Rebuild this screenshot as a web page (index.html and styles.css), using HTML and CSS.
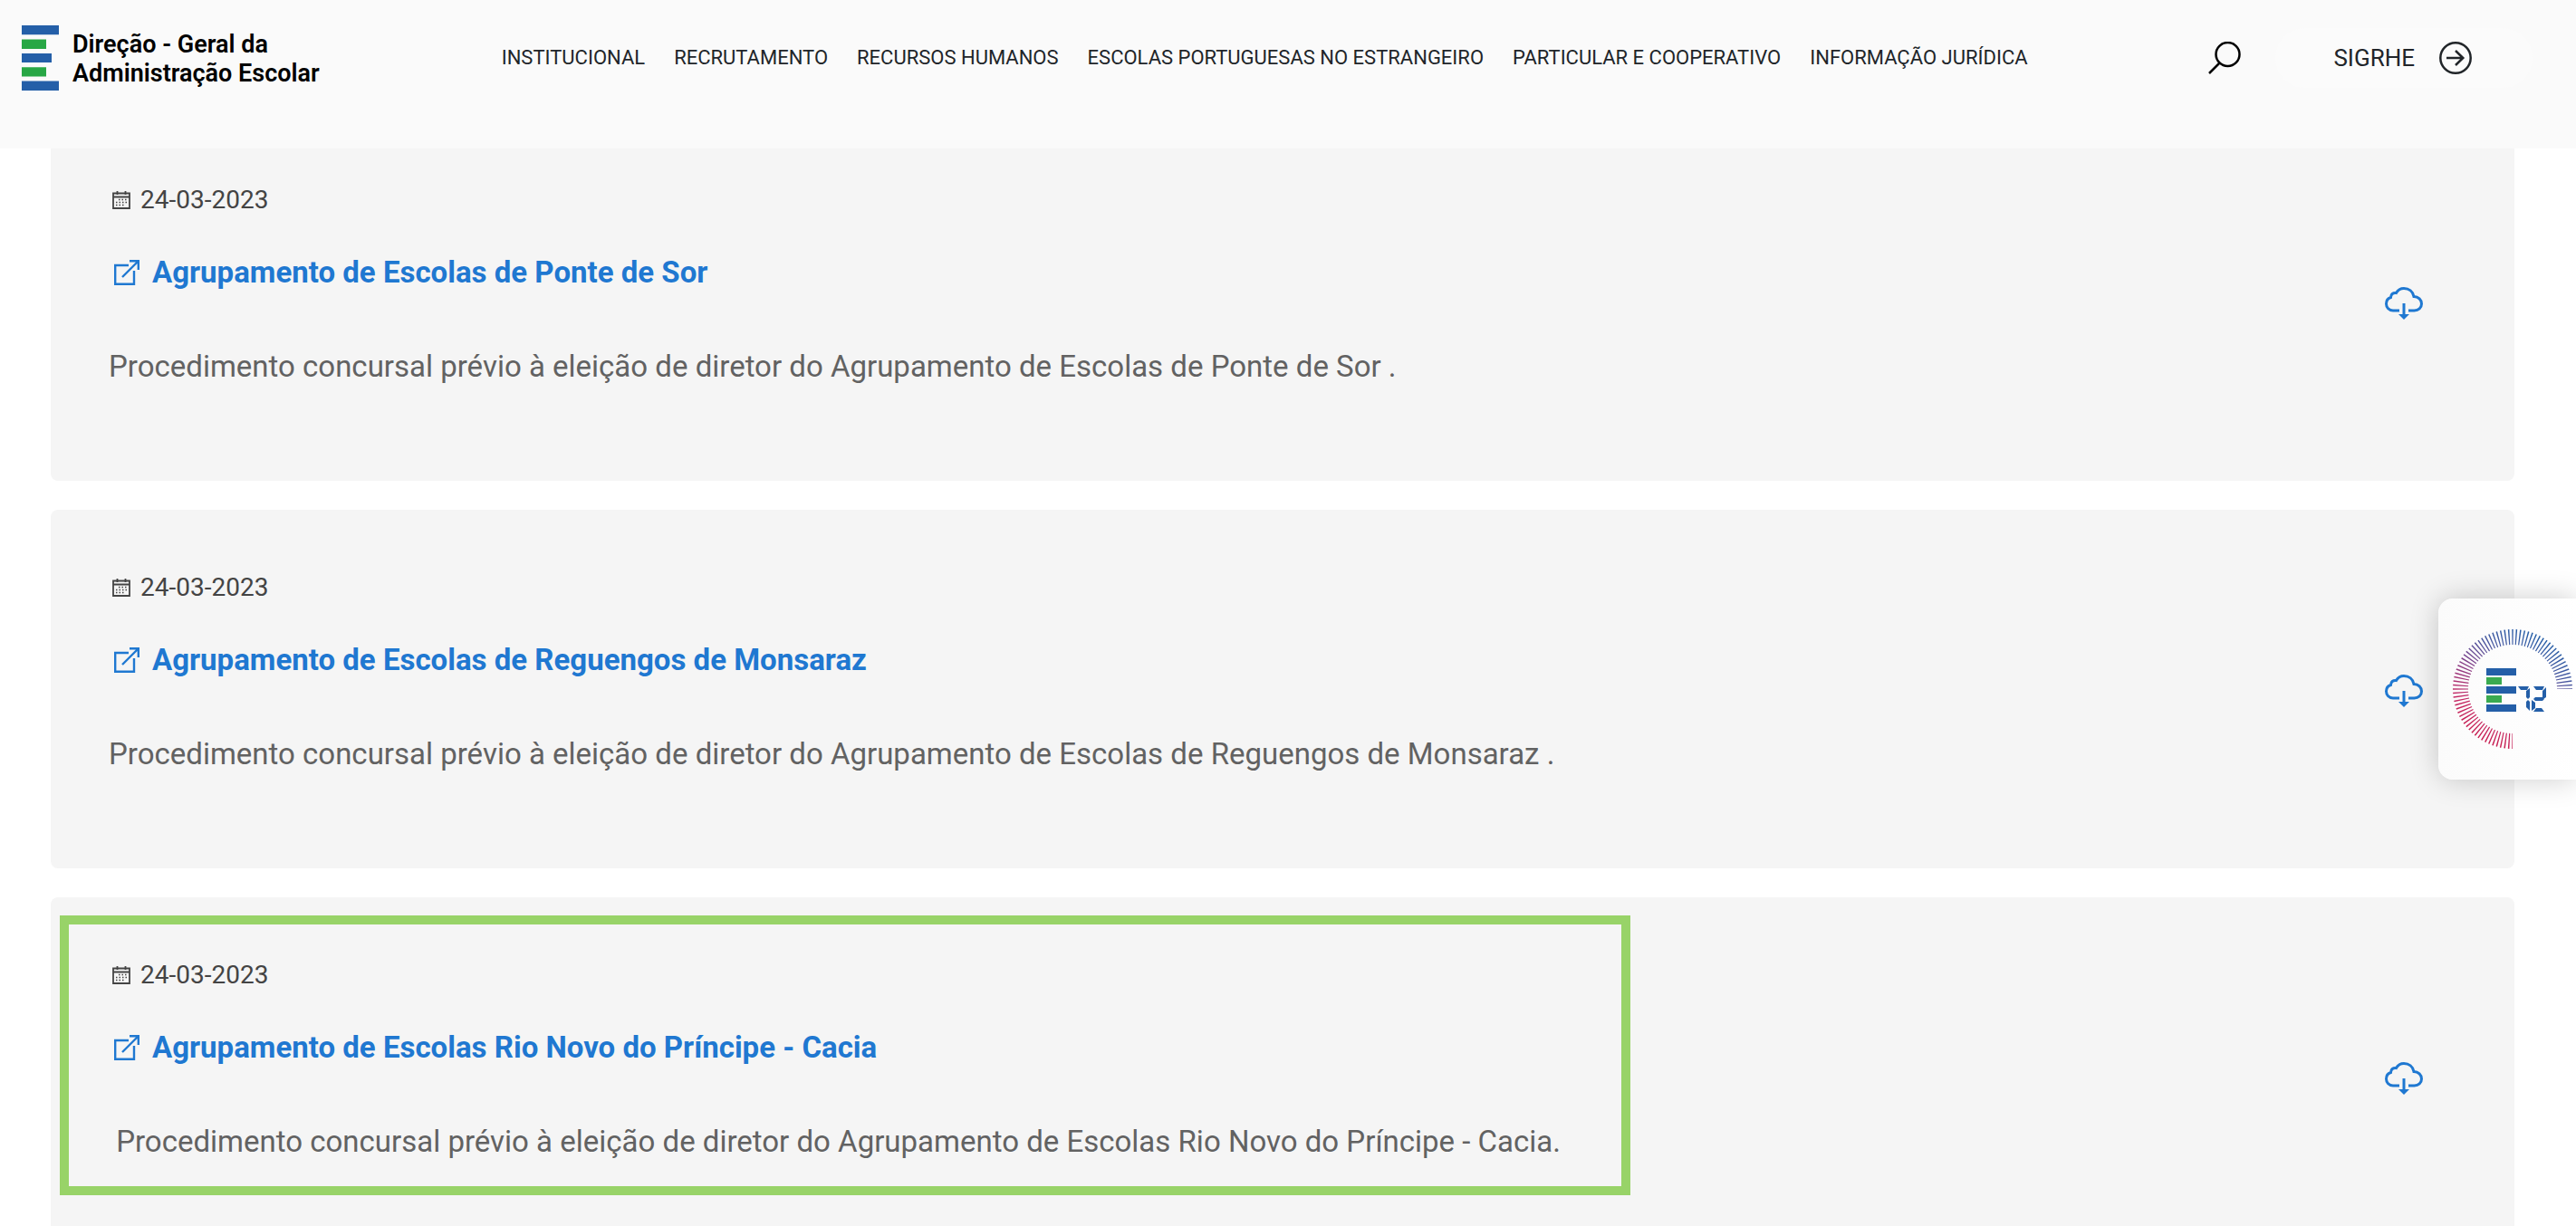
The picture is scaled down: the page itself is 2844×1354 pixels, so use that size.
FILE: index.html
```html
<!DOCTYPE html>
<html lang="pt">
<head>
<meta charset="utf-8">
<meta name="viewport" content="width=device-width, initial-scale=1">
<title>Direção-Geral da Administração Escolar</title>
<link rel="stylesheet" href="styles.css">
</head>
<body>
<svg class="sprite" aria-hidden="true">
  <symbol id="icon-calendar" viewBox="0 0 20 20">
    <path d="M1 2.500H19V19H1ZM1 6.500H19M5.500 0V4M14.500 0V4" fill="none" stroke="currentColor" stroke-width="1.800"/>
    <path d="M7 9.500H17M4 12.500H17M4 15.500H13" fill="none" stroke="currentColor" stroke-width="1.500" stroke-dasharray="1.500 2"/>
  </symbol>
  <symbol id="icon-external" viewBox="0 0 28 28">
    <path d="M16 6H1.200V26.800H22V12M17 1.200H26.800V11M26.500 1.500L9 19" fill="none" stroke="currentColor" stroke-width="2.400"/>
  </symbol>
  <symbol id="icon-cloud" viewBox="0 0 42 36">
    <path d="M16 26H9C4.500 26 1.500 22.500 1.500 18.500C1.500 15 3.500 12.500 6.500 11.500C6.500 8 9 6 12.500 6.500C14.500 3 17.500 1.500 21 1.500C26.500 1.500 31 5 32 10.500C37 10.500 40.500 14 40.500 18.500C40.500 23 37 26 32.500 26H26" fill="none" stroke="currentColor" stroke-width="3"/>
    <path d="M21 18V31" stroke="currentColor" stroke-width="3"/>
    <path d="M15 30H27L21 36Z" fill="currentColor"/>
  </symbol>
</svg>

<header class="header">
  <a class="brand" href="#">
    <svg class="brand-mark" width="41" height="72" viewBox="0 0 41 72" aria-hidden="true">
      <path fill="#245fa8" d="M0 0H41V10.300H0ZM0 31H33V41H0ZM0 61.500H41V72H0Z"/>
      <path fill="#28a745" d="M0 15.500H27V26H0ZM0 46.200H27V56.500H0Z"/>
    </svg>
    <span class="brand-name">Direção - Geral da<br>Administração Escolar</span>
  </a>
  <nav class="nav">
    <a href="#">INSTITUCIONAL</a>
    <a href="#">RECRUTAMENTO</a>
    <a href="#">RECURSOS HUMANOS</a>
    <a href="#">ESCOLAS PORTUGUESAS NO ESTRANGEIRO</a>
    <a href="#">PARTICULAR E COOPERATIVO</a>
    <a href="#">INFORMAÇÃO JURÍDICA</a>
  </nav>
  <div class="tools">
    <button class="search" type="button" aria-label="Pesquisar">
      <svg width="36" height="36" viewBox="0 0 36 36" fill="none" stroke="#000" stroke-width="2.500" aria-hidden="true"><circle cx="21.500" cy="14" r="13"/><path d="M12.500 23.500L1 35"/></svg>
    </button>
    <a class="sigrhe" href="#">SIGRHE
      <svg width="36" height="36" viewBox="0 0 36 36" fill="none" stroke="currentColor" stroke-width="2.500" aria-hidden="true"><circle cx="18" cy="18" r="16.700"/><path d="M8 18H26M18 10L26.300 18L18 26"/></svg>
    </a>
  </div>
</header>

<main class="list">
  <article class="card">
    <div class="entry">
      <p class="date"><svg width="20" height="20" aria-hidden="true"><use href="#icon-calendar"/></svg>24-03-2023</p>
      <h2 class="title"><a href="#"><svg width="28" height="28" aria-hidden="true"><use href="#icon-external"/></svg>Agrupamento de Escolas de Ponte de Sor</a></h2>
      <p class="text">Procedimento concursal prévio à eleição de diretor do Agrupamento de Escolas de Ponte de Sor .</p>
    </div>
    <a class="download" href="#" aria-label="Descarregar"><svg width="42" height="36" aria-hidden="true"><use href="#icon-cloud"/></svg></a>
  </article>
  <article class="card">
    <div class="entry">
      <p class="date"><svg width="20" height="20" aria-hidden="true"><use href="#icon-calendar"/></svg>24-03-2023</p>
      <h2 class="title"><a href="#"><svg width="28" height="28" aria-hidden="true"><use href="#icon-external"/></svg>Agrupamento de Escolas de Reguengos de Monsaraz</a></h2>
      <p class="text">Procedimento concursal prévio à eleição de diretor do Agrupamento de Escolas de Reguengos de Monsaraz .</p>
    </div>
    <a class="download" href="#" aria-label="Descarregar"><svg width="42" height="36" aria-hidden="true"><use href="#icon-cloud"/></svg></a>
  </article>
  <article class="card marked">
    <div class="entry">
      <p class="date"><svg width="20" height="20" aria-hidden="true"><use href="#icon-calendar"/></svg>24-03-2023</p>
      <h2 class="title"><a href="#"><svg width="28" height="28" aria-hidden="true"><use href="#icon-external"/></svg>Agrupamento de Escolas Rio Novo do Príncipe - Cacia</a></h2>
      <p class="text">&nbsp;Procedimento concursal prévio à eleição de diretor do Agrupamento de Escolas Rio Novo do Príncipe - Cacia.</p>
    </div>
    <a class="download" href="#" aria-label="Descarregar"><svg width="42" height="36" aria-hidden="true"><use href="#icon-cloud"/></svg></a>
  </article>
</main>

<a class="widget" href="#" aria-label="E72">
  <svg width="136" height="136" viewBox="-68 -68 136 136" aria-hidden="true">
    <defs>
      <linearGradient id="dial" gradientUnits="userSpaceOnUse" x1="30" y1="-60" x2="-30" y2="60">
        <stop offset="0" stop-color="#2360a8"/>
        <stop offset=".25" stop-color="#4a58a0"/>
        <stop offset=".5" stop-color="#8a4088"/>
        <stop offset=".75" stop-color="#c52a66"/>
        <stop offset="1" stop-color="#c81e50"/>
      </linearGradient>
    </defs>
    <path d="M57.500 0A57.500 57.500 0 1 0 0 57.500" fill="none" stroke="url(#dial)" stroke-width="17" pathLength="690" stroke-dasharray="3.400 6.600" stroke-dashoffset="1.700"/>
    <path fill="#245fa8" d="M-29 -23H4V-15H-29ZM-29 -3H4V5H-29ZM-29 17H4V25H-29Z"/>
    <path fill="#3aaa50" d="M-29 -13H-12V-5H-29ZM-29 7H-12V15H-29Z"/>
    <path fill="#245fa8" d="M6 -3H18L16 1H9ZM19 -1V9L17 11L15 9V2ZM17 12L19 14V24L15 20V14ZM23 -3H35L33 1H26ZM37 -2V9L34 11L33 9V2ZM25 9H33L35 11L33 13H25L23 11ZM21 12L25 15V21L21 24ZM26 21H32L35 25H23Z"/>
  </svg>
</a>
</body>
</html>
```
FILE: styles.css
```css
*,
*::before {
  box-sizing: border-box;
}

body {
  margin: 0;
  height: 100vh;
  overflow: hidden;
  background: #fff;
  color: #212529;
  font-family: Roboto, "Liberation Sans", sans-serif;
}

a {
  color: inherit;
  text-decoration: none;
}

svg {
  display: block;
  flex: none;
}

.sprite {
  display: none;
}

/* Header */
.header {
  position: fixed;
  top: 0;
  left: 0;
  right: 0;
  z-index: 2;
  display: grid;
  grid-template-columns: minmax(max-content, 19%) 1fr auto;
  align-items: center;
  padding: 28px 48px 64px 24px;
  background: #fafafa;
}

.brand {
  display: flex;
  align-items: center;
  gap: 15px;
  color: #000;
  font-size: 27px;
  font-weight: 600;
  line-height: 32px;
}

.brand-name {
  padding-top: 2px;
}

.nav {
  display: flex;
  flex-wrap: wrap;
  gap: 0 32px;
  padding-left: 3px;
  font-size: 22px;
  line-height: 32px;
}

.tools {
  display: flex;
  align-items: center;
  gap: 38px;
}

.search {
  padding: 0;
  border: 0;
  background: none;
}

.sigrhe {
  display: flex;
  align-items: center;
  gap: 27px;
  padding: 15px 67px 15px 64px;
  border-radius: 33px;
  background: #fbfbfb;
  font-size: 26px;
  line-height: 32px;
}

/* Entries */
.list {
  display: flex;
  flex-direction: column;
  gap: 32px;
  padding: 135px 68px 32px 56px;
}

.card {
  position: relative;
  display: flex;
  flex: none;
  align-items: center;
  justify-content: space-between;
  padding: 64px 101px 102px 64px;
  border-radius: 8px;
  background: #f5f5f5;
}

.marked::before {
  content: "";
  position: absolute;
  top: 20px;
  left: 10px;
  width: 1734px;
  height: 309px;
  border: 10px solid #98d368;
  pointer-events: none;
}

.date,
.title,
.text {
  margin: 0;
}

.date {
  display: flex;
  align-items: center;
  gap: 11px;
  padding-left: 4px;
  color: #444;
  font-size: 28px;
  line-height: 44px;
}

.title {
  display: flex;
  margin-top: 34px;
  padding-left: 6px;
  color: #1f78d1;
  font-size: 33px;
  font-weight: 700;
  line-height: 48px;
}

.title a {
  display: flex;
  align-items: center;
  gap: 14px;
}

.text {
  margin-top: 56px;
  color: #626262;
  font-size: 33px;
  line-height: 48px;
}

.download {
  margin-top: 42px;
  color: #1f78d1;
}

/* Side badge */
.widget {
  position: fixed;
  top: 661px;
  right: 0;
  z-index: 3;
  display: flex;
  align-items: center;
  padding: 32px 2px 32px 14px;
  border-radius: 16px 0 0 16px;
  background: linear-gradient(90deg, #fbfbfb, #fff);
  box-shadow: 0 0 32px rgba(0, 0, 0, .2);
}
```
